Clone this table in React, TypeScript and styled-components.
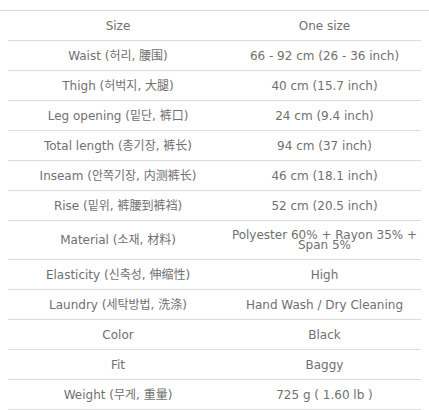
import { createGlobalStyle } from "styled-components";
import styled from "styled-components";

const GlobalStyle = createGlobalStyle`
body {
  margin: 0;
  background: #ffffff;
  font-family: "DejaVu Sans", "Noto Sans CJK KR", "Noto Sans CJK SC", sans-serif;
}
`;

const Page = styled.div`
padding-top: 10px;
width: 429px;
`;

const Table = styled.div`
border-top: 1px solid #dadada;
padding: 0 8px;
`;

const Row = styled.div<{ $tall?: boolean }>`
display: grid;
grid-template-columns: 220px 193px;
height: ${(p) => (p.$tall ? 38 : 29)}px;
border-bottom: 1px solid #dcdcdc;
`;

const Cell = styled.div<{ $tight?: boolean }>`
display: flex;
align-items: center;
justify-content: center;
text-align: center;
padding: 0 2px;
font-size: 12px;
line-height: ${(p) => (p.$tight ? "10px" : "14px")};
color: #707070;
`;

const specs: { label: string; value: string; tall?: boolean }[] = [
  { label: "Size", value: "One size" },
  { label: "Waist (허리, 腰围)", value: "66 - 92 cm (26 - 36 inch)" },
  { label: "Thigh (허벅지, 大腿)", value: "40 cm (15.7 inch)" },
  { label: "Leg opening (밑단, 裤口)", value: "24 cm (9.4 inch)" },
  { label: "Total length (총기장, 裤长)", value: "94 cm (37 inch)" },
  { label: "Inseam (안쪽기장, 内测裤长)", value: "46 cm (18.1 inch)" },
  { label: "Rise (밑위, 裤腰到裤裆)", value: "52 cm (20.5 inch)" },
  { label: "Material (소재, 材料)", value: "Polyester 60% + Rayon 35% + Span 5%", tall: true },
  { label: "Elasticity (신축성, 伸缩性)", value: "High" },
  { label: "Laundry (세탁방법, 洗涤)", value: "Hand Wash / Dry Cleaning" },
  { label: "Color", value: "Black" },
  { label: "Fit", value: "Baggy" },
  { label: "Weight (무게, 重量)", value: "725 g ( 1.60 lb )" },
];

export default function App() {
  return (
    <>
      <GlobalStyle />
      <Page>
        <Table>
          {specs.map((s) => (
            <Row key={s.label} $tall={s.tall}>
              <Cell>{s.label}</Cell>
              <Cell $tight={s.tall}>{s.value}</Cell>
            </Row>
          ))}
        </Table>
      </Page>
    </>
  );
}
